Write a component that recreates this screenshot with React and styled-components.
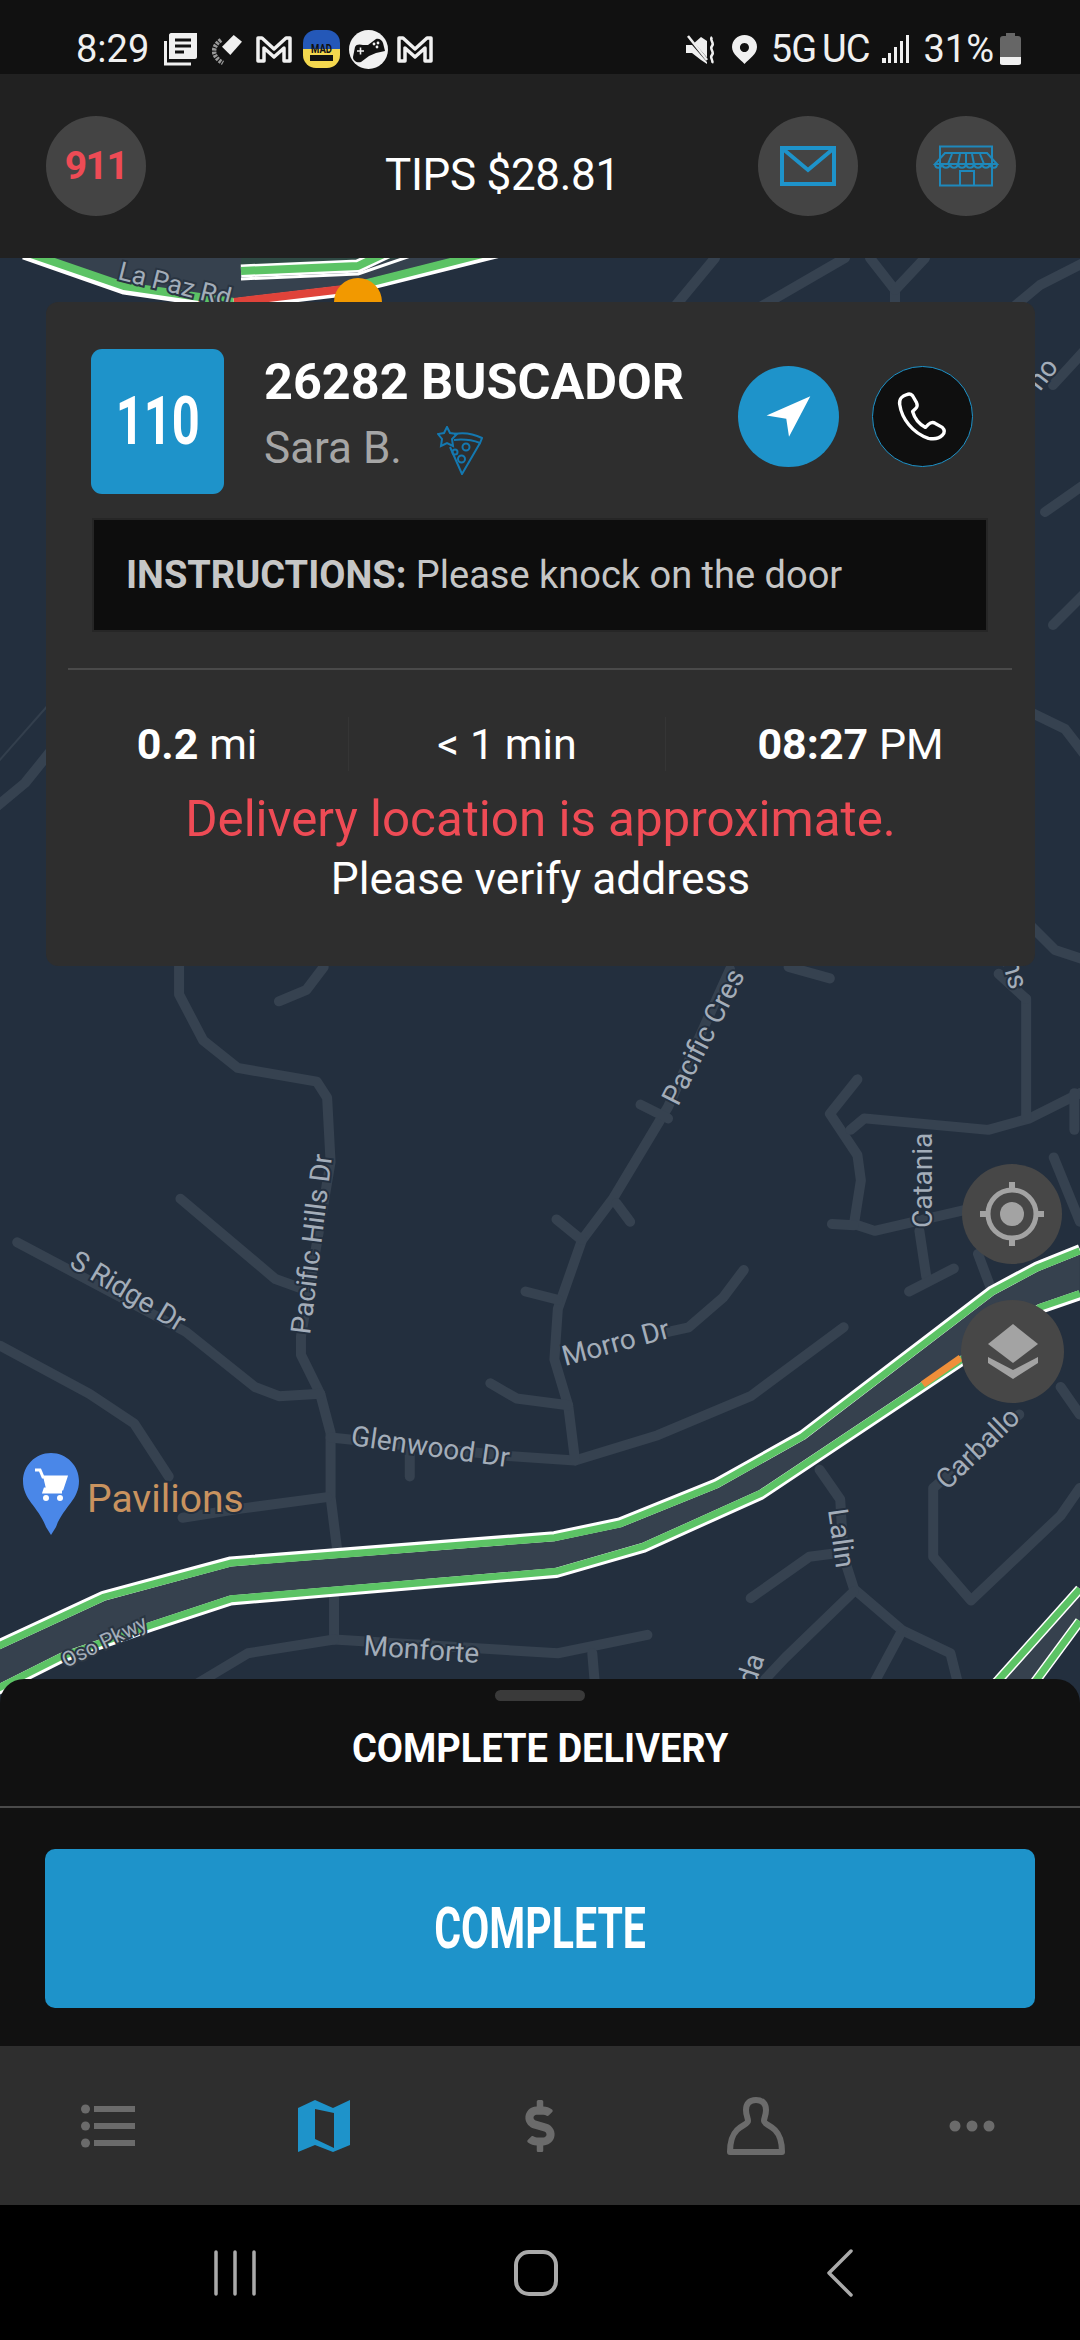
import styled, { createGlobalStyle } from "styled-components";
import { FaDollarSign } from "react-icons/fa";

const BLUE = "#1e93ca";
const RED = "#ee4b55";
const ROAD = "#364250";
const MUTED = "#6b6b6b";

const GlobalStyle = createGlobalStyle`
  html, body {
    margin: 0;
    padding: 0;
    background: #000;
  }
  * {
    box-sizing: border-box;
  }
`;

const Page = styled.div`
  width: 1080px;
  height: 2340px;
  overflow: hidden;
  display: flex;
  flex-direction: column;
  font-family: Roboto, "Liberation Sans", sans-serif;
  color: #fff;
`;

const StatusBar = styled.div`
  height: 74px;
  flex: none;
  background: #111;
  display: flex;
  align-items: flex-end;
  justify-content: space-between;
  padding: 0 59px 5px 76px;
`;

const StatusGroup = styled.div`
  display: flex;
  align-items: center;
  height: 40px;
`;

const StatusText = styled.span`
  font-size: ${(p) => p.$size || 38}px;
  line-height: 40px;
  color: #f0f0f0;
  margin-left: ${(p) => p.$ml || 0}px;
  letter-spacing: ${(p) => p.$ls || 0}px;
  white-space: nowrap;
`;

const StatusIcon = styled.svg`
  flex: none;
  margin-left: ${(p) => p.$ml || 0}px;
`;

const Header = styled.header`
  height: 184px;
  flex: none;
  background: #212121;
  display: flex;
  align-items: center;
  padding: 0 64px 0 46px;
`;

const RoundButton = styled.div`
  width: 100px;
  height: 100px;
  flex: none;
  border-radius: 50%;
  background: #444;
  display: flex;
  align-items: center;
  justify-content: center;
`;

const EmergencyText = styled.span`
  color: ${RED};
  font-size: 39px;
  font-weight: 700;
  letter-spacing: -1.5px;
`;

const Tips = styled.div`
  margin-left: 239px;
  padding-top: 18px;
  font-size: 44px;
  letter-spacing: -0.3px;
  white-space: nowrap;
`;

const HeaderActions = styled.div`
  margin-left: auto;
  display: flex;
  gap: 58px;
`;

const MapArea = styled.div`
  position: relative;
  height: 1445px;
  flex: none;
  background: #232f3e;
  padding-top: 44px;
`;

const MapDrawing = styled.svg`
  position: absolute;
  inset: 0;
`;

const MapLabel = styled.text`
  font-family: Roboto, sans-serif;
  font-size: ${(p) => p.$size || 28}px;
  fill: ${(p) => p.$color || "#a3adb9"};
  stroke: ${(p) => p.$halo || "#232f3e"};
  stroke-width: 4px;
  paint-order: stroke;
`;

const Card = styled.section`
  position: relative;
  width: 989px;
  height: 664px;
  margin-left: 46px;
  padding-top: 47px;
  background: #2e2e2e;
  border-radius: 12px;
`;

const TopRow = styled.div`
  display: flex;
  align-items: flex-start;
  margin: 0 62px 0 45px;
`;

const StopBadge = styled.div`
  width: 133px;
  height: 145px;
  flex: none;
  border-radius: 11px;
  background: ${BLUE};
  display: flex;
  align-items: center;
  justify-content: center;
  font-size: 66px;
  font-weight: 700;
`;

const StopNumber = styled.span`
  display: inline-block;
  transform: scaleX(0.74);
`;

const StopInfo = styled.div`
  margin-left: 40px;
`;

const Address = styled.h1`
  margin: 8px 0 0;
  font-size: 50.4px;
  line-height: 50px;
  font-weight: 700;
  white-space: nowrap;
`;

const CustomerRow = styled.div`
  display: flex;
  align-items: center;
  margin-top: 13px;
  height: 56px;
`;

const CustomerName = styled.span`
  font-size: 44px;
  color: #a6a6a6;
`;

const PizzaIcon = styled.svg`
  margin: 4px 0 0 35px;
  flex: none;
`;

const StopActions = styled.div`
  margin-left: auto;
  margin-top: 17px;
  display: flex;
  gap: 33px;
`;

const CircleAction = styled.div`
  width: 101px;
  height: 101px;
  border-radius: 50%;
  background: ${(p) => (p.$dark ? "#0f0f0f" : BLUE)};
  border: ${(p) => (p.$dark ? `1px solid ${BLUE}` : "none")};
  display: flex;
  align-items: center;
  justify-content: center;
`;

const InstructionBox = styled.div`
  margin: 24px 47px 0 46px;
  height: 114px;
  background: #0d0d0d;
  border: 2px solid #262626;
  display: flex;
  align-items: center;
  padding: 0 32px;
  font-size: 38px;
  color: #c6c6c6;
  white-space: pre;
`;

const InstructionLabel = styled.strong`
  font-weight: 700;
`;

const CardDivider = styled.div`
  height: 2px;
  margin: 36px 23px 0 22px;
  background: #4a4a4a;
`;

const StatsRow = styled.div`
  display: grid;
  grid-template-columns: 302px 317px 370px;
  margin-top: 47px;
  height: 54px;
`;

const Stat = styled.div`
  display: flex;
  align-items: center;
  justify-content: center;
  font-size: 43px;
  white-space: pre;
  border-left: ${(p) => (p.$first ? "none" : "1px solid #353535")};
`;

const StatValue = styled.strong`
  font-weight: 700;
`;

const Warning = styled.div`
  margin-top: 19px;
  text-align: center;
  font-size: 49.3px;
  line-height: 58px;
  color: ${RED};
`;

const WarningHint = styled.div`
  margin-top: 6px;
  text-align: center;
  font-size: 44.3px;
  line-height: 50px;
`;

const MapFab = styled.div`
  position: absolute;
  right: ${(p) => p.$right}px;
  top: ${(p) => p.$top}px;
  width: ${(p) => p.$size}px;
  height: ${(p) => p.$size}px;
  border-radius: 50%;
  background: #474747;
  display: flex;
  align-items: center;
  justify-content: center;
`;

const Sheet = styled.section`
  position: relative;
  flex: none;
  height: 367px;
  margin-top: -24px;
  background: #111;
  border-radius: 24px 24px 0 0;
  padding-top: 11px;
`;

const SheetHandle = styled.div`
  width: 90px;
  height: 11px;
  margin: 0 auto;
  border-radius: 6px;
  background: #3a3a3a;
`;

const SheetTitle = styled.div`
  height: 107px;
  padding-bottom: 10px;
  display: flex;
  align-items: center;
  justify-content: center;
  border-bottom: 2px solid #4a4a4a;
  font-size: 40px;
  font-weight: 700;
  white-space: nowrap;
`;

const SheetTitleText = styled.span`
  display: inline-block;
  transform: scaleX(0.95);
`;

const CompleteButton = styled.button`
  display: flex;
  align-items: center;
  justify-content: center;
  width: 990px;
  height: 159px;
  margin: 41px 0 0 45px;
  border: none;
  border-radius: 10px;
  background: ${BLUE};
  color: #fff;
  font-family: Roboto, sans-serif;
  font-size: 57px;
  font-weight: 700;
`;

const CompleteText = styled.span`
  display: inline-block;
  transform: scaleX(0.72);
`;

const TabBar = styled.nav`
  height: 159px;
  flex: none;
  background: #2e2e2e;
  display: grid;
  grid-template-columns: repeat(5, 216px);
  align-items: center;
  justify-items: center;
`;

const SystemBar = styled.div`
  flex: 1;
  background: #000;
  padding-left: 85px;
  display: grid;
  grid-template-columns: 300px 302px 306px;
  align-items: center;
  justify-items: center;
`;

function MapBackground() {
  const top = "M-30 1510 L150 1385 L335 1310 L805 1255 L900 1225 L1040 1140 L1165 1035 L1440 720 L1505 668 L1568 630";
  const bottom = "M-30 1610 L90 1520 L220 1452 L335 1395 L808 1335 L935 1280 L1105 1165 L1510 760 L1568 730";
  const ribbon = "M-30 1510 L150 1385 L335 1310 L805 1255 L900 1225 L1040 1140 L1165 1035 L1440 720 L1505 668 L1568 630 L1568 730 L1510 760 L1105 1165 L935 1280 L808 1335 L335 1395 L220 1452 L90 1520 L-30 1610 Z";
  const rampLeft = "M1568 1370 L1450 1568 L1430 1600";
  const rampRight = "M1568 1440 L1505 1568 L1490 1600";
  const streets = [
    "M260 0 L260 75 L295 175 L345 235 L460 265 L475 300 L480 440 L437 820 L437 860 L465 945 L480 1030 L480 1170 L490 1290",
    "M485 1390 L485 1480",
    "M405 90 L445 65 L470 15",
    "M262 520 L400 695 L437 715",
    "M25 615 L270 810 L370 930 L405 950 L465 945",
    "M0 840 L130 945 L195 1010 L245 1125",
    "M265 1215 L350 1195 L475 1170",
    "M480 1040 L735 1080 L835 1090 L955 1035 L1090 950 L1225 800",
    "M595 1060 L595 1125",
    "M1060 20 L970 320 L890 520 L845 610 L810 760 L805 870 L825 970 L835 1090",
    "M930 315 L970 345",
    "M808 565 L845 610",
    "M895 530 L915 570",
    "M763 722 L810 740",
    "M712 922 L750 955 L825 970",
    "M970 810 L1000 800 L1050 735 L1080 675",
    "M1245 260 L1205 335 L1245 425 L1250 480 L1240 575 L1270 590 L1400 545",
    "M1208 575 L1240 578",
    "M1235 370 L1255 345 L1435 370 L1495 345 L1568 290",
    "M1490 85 L1490 345",
    "M1560 290 L1560 370",
    "M1335 590 L1345 690",
    "M1385 672 L1320 722",
    "M1420 640 L1440 720",
    "M1530 430 L1568 570",
    "M1480 990 L1355 1150 L1355 1300 L1410 1395 L1540 1210 L1568 1150",
    "M1540 930 L1568 990",
    "M1190 1110 L1220 1175 L1225 1300 L1240 1370 L1310 1460 L1380 1510 L1395 1600",
    "M1090 1390 L1175 1300 L1225 1290",
    "M1240 1375 L1140 1520 L1090 1600",
    "M1310 1460 L1260 1600",
    "M485 1480 L810 1510 L940 1470",
    "M485 1480 L360 1510 L260 1600",
    "M860 1510 L865 1600",
    "M1145 15 L1205 40",
    "M1450 30 L1490 85",
  ];
  const upperStreets = [
    "M715 258 L672 310",
    "M845 258 L755 310",
    "M870 258 L895 290 L895 310",
    "M925 258 L895 290",
    "M1085 262 L1040 285 L1010 310",
    "M1085 350 L1053 385",
    "M1085 484 L1045 512",
    "M1085 593 L1053 625",
    "M1030 712 L1065 729 L1085 755",
    "M1030 925 L1055 950 L1085 960",
    "M-5 808 L25 783 L50 752",
  ];

  return (
    <MapDrawing width="1080" height="1445" viewBox="0 258 1080 1445">
      <g fill="none" stroke={ROAD} strokeWidth="10" strokeLinecap="round" strokeLinejoin="round">
        {upperStreets.map((d) => (
          <path key={d} d={d} />
        ))}
      </g>
      <path d="M-2 762 L50 703" stroke="#333f4d" strokeWidth="2" fill="none" />

      {/* La Paz Rd, above the card */}
      <path d="M24 258 L124 285 L234 303 L344 290 L492 258 Z" fill="#36414e" />
      <path d="M241 258 H400 L358 266 L241 272 Z" fill="#2f4a45" />
      <g fill="none" strokeLinejoin="round">
        <path d="M24 254 L124 289 L234 305" stroke="#fff" strokeWidth="11" />
        <path d="M28 253 L124 286 L234 302" stroke="#5cc365" strokeWidth="8" />
        <path d="M241 271 L358 266 L392 250" stroke="#fff" strokeWidth="13" />
        <path d="M241 271 L358 266 L392 250" stroke="#5cc365" strokeWidth="8" />
        <path d="M241 279 L358 274 L428 250" stroke="#fff" strokeWidth="3" />
        <path d="M234 304 L344 291 L500 252" stroke="#fff" strokeWidth="11" />
        <path d="M234 302 L344 289" stroke="#e0433a" strokeWidth="8" />
        <path d="M344 289 L498 250" stroke="#5cc365" strokeWidth="8" />
      </g>
      <circle cx="358" cy="302" r="24" fill="#f29900" />
      <MapLabel x="117" y="279" transform="rotate(14 117 279)" $size="26" $halo="#2a3542">
        La Paz Rd
      </MapLabel>

      {/* the rest is traced at the scale of the lower map */}
      <g transform="translate(0 960) scale(0.6887 0.4591)">
        <g fill="none" stroke={ROAD} strokeWidth="10" strokeLinecap="round" strokeLinejoin="round">
          {streets.map((d) => (
            <path key={d} d={d} vectorEffect="non-scaling-stroke" />
          ))}
        </g>
        <path d={ribbon} fill="#36414e" />
        <path d="M1568 1370 L1430 1600 L1490 1600 L1568 1440 Z" fill="#36414e" />
        <g fill="none" strokeLinejoin="round">
          <path d={top} stroke="#fff" strokeWidth="10" vectorEffect="non-scaling-stroke" />
          <path d={top} transform="translate(0 3.5)" stroke="#5cc365" strokeWidth="7" vectorEffect="non-scaling-stroke" />
          <path d={bottom} stroke="#fff" strokeWidth="10" vectorEffect="non-scaling-stroke" />
          <path d={bottom} transform="translate(0 -3.5)" stroke="#5cc365" strokeWidth="7" vectorEffect="non-scaling-stroke" />
          <path d="M1340 928 L1395 870" transform="translate(0 -3.5)" stroke="#ef8f3a" strokeWidth="7" vectorEffect="non-scaling-stroke" />
          <path d={rampLeft} stroke="#fff" strokeWidth="10" vectorEffect="non-scaling-stroke" />
          <path d={rampLeft} stroke="#5cc365" strokeWidth="7" vectorEffect="non-scaling-stroke" />
          <path d={rampRight} stroke="#fff" strokeWidth="10" vectorEffect="non-scaling-stroke" />
          <path d={rampRight} stroke="#5cc365" strokeWidth="7" vectorEffect="non-scaling-stroke" />
        </g>
      </g>

      <MapLabel x="678" y="1107" transform="rotate(-63 678 1107)">Pacific Cres</MapLabel>
      <MapLabel x="310" y="1335" transform="rotate(-83 310 1335)">Pacific Hills Dr</MapLabel>
      <MapLabel x="68" y="1266" transform="rotate(31 68 1266)">S Ridge Dr</MapLabel>
      <MapLabel x="565" y="1366" transform="rotate(-15 565 1366)">Morro Dr</MapLabel>
      <MapLabel x="350" y="1445" transform="rotate(8 350 1445)">Glenwood Dr</MapLabel>
      <MapLabel x="932" y="1228" transform="rotate(-90 932 1228)">Catania</MapLabel>
      <MapLabel x="947" y="1491" transform="rotate(-44 947 1491)">Carballo</MapLabel>
      <MapLabel x="828" y="1510" transform="rotate(82 828 1510)">Lalin</MapLabel>
      <MapLabel x="363" y="1655" transform="rotate(4 363 1655)">Monforte</MapLabel>
      <MapLabel x="66" y="1668" transform="rotate(-26 66 1668)" $size="21" $halo="#2a3542">Oso Pkwy</MapLabel>
      <MapLabel x="755" y="1687" transform="rotate(-72 755 1687)">da</MapLabel>
      <MapLabel x="1002" y="962" transform="rotate(74 1002 962)">ns</MapLabel>
      <MapLabel x="1040" y="392" transform="rotate(-52 1040 392)">no</MapLabel>

      <path
        d="M51 1453 C35 1453 23 1466 23 1481 C23 1500 38 1506 46 1527 L51 1535 L56 1527 C64 1506 79 1500 79 1481 C79 1466 67 1453 51 1453 Z"
        fill="#4a87e8"
      />
      <path d="M35 1470 H40 L43 1477 H66 L62 1489 H45 L44 1492 H62" fill="none" stroke="#fff" strokeWidth="3" />
      <path d="M43 1476 H66 L62 1489 H46 Z" fill="#fff" />
      <circle cx="46" cy="1498" r="3" fill="#fff" />
      <circle cx="60" cy="1498" r="3" fill="#fff" />
      <MapLabel x="87" y="1512" $size="39" $color="#c9935f" $halo="#232f3e">Pavilions</MapLabel>
    </MapDrawing>
  );
}

function MailGlyph() {
  return (
    <svg width="56" height="40" viewBox="0 0 56 40" fill="none" stroke={BLUE} strokeWidth="4">
      <rect x="2" y="2" width="52" height="36" />
      <path d="M3 3 L28 24 L53 3" />
    </svg>
  );
}

function StoreGlyph() {
  return (
    <svg width="66" height="42" viewBox="0 0 66 42" fill="none" stroke="#1e88bb" strokeWidth="2">
      <path d="M7 1.5 H59 V40.5 H7 Z" />
      <path d="M12 8 H54 L64 19 H2 Z" />
      <path d="M2 19 C2 24 8 24 9 19 C10 24 16 24 17 19 C18 24 24 24 25 19 C26 24 32 24 33 19 C34 24 40 24 41 19 C42 24 48 24 49 19 C50 24 56 24 57 19 C58 24 64 24 64 19" />
      <path d="M19 9 L15 19 M27 9 L25 19 M33 9 V19 M39 9 L41 19 M47 9 L51 19" />
      <path d="M27 40 V26 H41 V40" />
    </svg>
  );
}

function BookGlyph() {
  return (
    <StatusIcon $ml={15} width="33" height="33" viewBox="0 0 33 33">
      <path d="M5 2 C5 1 6 0 7 0 H33 V24 C33 25 32 26 31 26 H5 Z" fill="#f0f0f0" />
      <path d="M11 7 H27 M11 13 H27 M11 19 H20" stroke="#111" strokeWidth="3" />
      <path d="M1.5 8 V31 H27" fill="none" stroke="#f0f0f0" strokeWidth="3" />
    </StatusIcon>
  );
}

function MailMark({ ml }) {
  return (
    <StatusIcon $ml={ml} width="36" height="28" viewBox="0 0 36 28" fill="none" stroke="#f0f0f0" strokeWidth="3.5" strokeLinejoin="round">
      <path d="M2 26 V3 H6 L18 14 L30 3 H34 V26 H28 V13 L18 22 L8 13 V26 Z" />
    </StatusIcon>
  );
}

function NotificationIcons() {
  return (
    <StatusGroup>
      <StatusText>8:29</StatusText>
      <BookGlyph />
      <StatusIcon $ml={15} width="32" height="32" viewBox="0 0 32 32">
        <path d="M10 13.7 L21.7 2 L30 8.7 L18.3 22 Z" fill="#f0f0f0" />
        <path d="M9 7 C-1 14 0 24 11 30" fill="none" stroke="#999" strokeWidth="4.5" strokeDasharray="2.5 1" />
      </StatusIcon>
      <MailMark ml={12} />
      <StatusIcon $ml={11} width="37" height="38" viewBox="0 0 37 38">
        <defs>
          <clipPath id="madClip">
            <rect width="37" height="38" rx="13" />
          </clipPath>
        </defs>
        <g clipPath="url(#madClip)">
          <rect width="37" height="19" fill="#2458b8" />
          <rect y="19" width="37" height="19" fill="#f4d84e" />
          <text x="18.5" y="23" textAnchor="middle" fontFamily="Roboto, sans-serif" fontSize="13" fontWeight="700" fill="#111" textLength="21" lengthAdjust="spacingAndGlyphs">MAD</text>
          <rect x="7" y="25" width="23" height="6" fill="#111" />
        </g>
      </StatusIcon>
      <StatusIcon $ml={9} width="39" height="39" viewBox="0 0 39 39">
        <circle cx="19.5" cy="19.5" r="19.5" fill="#f0f0f0" />
        <path d="M4 27 L6 17 C7 14 11 14 14 15 H19 L27 9 C30 8 33 10 34 13 L36 21 L27 23 L20 26 L12 32 C8 33 4 31 4 27 Z" fill="#111" />
        <path d="M8 21 h7 M11.5 17.5 v7" stroke="#f0f0f0" strokeWidth="1.6" />
        <circle cx="25" cy="14" r="1.4" fill="#f0f0f0" />
        <circle cx="28" cy="17" r="1.4" fill="#f0f0f0" />
        <circle cx="29" cy="13" r="1.4" fill="#f0f0f0" />
      </StatusIcon>
      <MailMark ml={9} />
    </StatusGroup>
  );
}

function SystemIcons() {
  return (
    <StatusGroup>
      <StatusIcon width="30" height="29" viewBox="0 0 30 29">
        <path d="M0 10 H6 L15 2 L21 6 V29 L15 25 L6 18 H0 Z" fill="#f0f0f0" />
        <path d="M2 3 L22 26" stroke="#111" strokeWidth="3" />
        <path d="M2 1 L21 25" stroke="#f0f0f0" strokeWidth="2.5" />
        <path d="M26 2 C23 5 29 8 26 11 C23 14 29 17 26 20 C23 23 28 25 26 28" fill="none" stroke="#f0f0f0" strokeWidth="2.5" />
      </StatusIcon>
      <StatusIcon $ml={16} width="25" height="29" viewBox="0 0 25 29">
        <path fillRule="evenodd" d="M12.5 0 C5.5 0 0 5 0 12 C0 19 8 24 12.5 29 C17 24 25 19 25 12 C25 5 19.5 0 12.5 0 Z M12.5 8 A4.5 4.5 0 1 1 12.4 8 Z" fill="#f0f0f0" />
      </StatusIcon>
      <StatusText $ml={14} $ls={-1}>5G</StatusText>
      <StatusText $ml={6} $ls={-1}>UC</StatusText>
      <StatusIcon $ml={13} width="28" height="28" viewBox="0 0 28 28" fill="#f0f0f0">
        <rect x="0" y="23" width="4" height="5" />
        <rect x="6" y="18" width="3" height="10" />
        <rect x="12" y="12" width="3" height="16" />
        <rect x="18" y="6" width="3" height="22" />
        <rect x="24" y="0" width="3" height="28" />
      </StatusIcon>
      <StatusText $ml={13}>31%</StatusText>
      <StatusIcon $ml={6} width="21" height="32" viewBox="0 0 21 32">
        <path d="M6 0 H15 V3 H18 C20 3 21 4 21 6 V30 C21 31 20 32 18 32 H3 C1 32 0 31 0 30 V6 C0 4 1 3 3 3 H6 Z" fill="#666" />
        <path d="M0 24 H21 V30 C21 31 20 32 18 32 H3 C1 32 0 31 0 30 Z" fill="#f0f0f0" />
      </StatusIcon>
    </StatusGroup>
  );
}

export default function App() {
  return (
    <>
      <GlobalStyle />
      <Page>
        <StatusBar>
          <NotificationIcons />
          <SystemIcons />
        </StatusBar>

        <Header>
          <RoundButton>
            <EmergencyText>911</EmergencyText>
          </RoundButton>
          <Tips>TIPS $28.81</Tips>
          <HeaderActions>
            <RoundButton>
              <MailGlyph />
            </RoundButton>
            <RoundButton>
              <StoreGlyph />
            </RoundButton>
          </HeaderActions>
        </Header>

        <MapArea>
          <MapBackground />
          <Card>
            <TopRow>
              <StopBadge>
                <StopNumber>110</StopNumber>
              </StopBadge>
              <StopInfo>
                <Address>26282 BUSCADOR</Address>
                <CustomerRow>
                  <CustomerName>Sara B.</CustomerName>
                  <PizzaIcon width="46" height="49" viewBox="0 0 46 49" fill="none" stroke="#1478b0" strokeWidth="2">
                    <path d="M10 1 L13 7 L20 8 L15 13 L16 20 L10 17 L4 20 L5 13 L1 8 L7 7 Z" />
                    <path d="M17 8 C27 6 37 8 45 12 L43 17 C35 14 26 13 17 14" />
                    <path d="M43 17 L25 48 L13 21" />
                    <circle cx="29" cy="21" r="3.5" />
                    <circle cx="24.5" cy="33" r="3.5" />
                    <circle cx="18" cy="26" r="2.5" />
                  </PizzaIcon>
                </CustomerRow>
              </StopInfo>
              <StopActions>
                <CircleAction>
                  <svg width="101" height="101" viewBox="0 0 100 100">
                    <path d="M71.6 30 L28.3 49 L47.8 52.3 L50.5 70 Z" fill="#fff" />
                  </svg>
                </CircleAction>
                <CircleAction $dark>
                  <svg width="99" height="99" viewBox="0 0 100 100" fill="none" stroke="#fff" strokeWidth="3.4" strokeLinejoin="round">
                    <path d="M34 28 C30 29 26 32 27 38 C29 52 40 67 56 72 C61 73 66 73 70 69 C73 66 72 63 70 61 L63 57 C60 55 58 56 56 58 L53 61 C47 58 42 52 40 45 L43 42 C45 40 45 38 44 36 L40 29 C38 27 36 27 34 28 Z" />
                  </svg>
                </CircleAction>
              </StopActions>
            </TopRow>

            <InstructionBox>
              <InstructionLabel>INSTRUCTIONS:</InstructionLabel> Please knock on the door
            </InstructionBox>

            <CardDivider />

            <StatsRow>
              <Stat $first>
                <StatValue>0.2</StatValue> mi
              </Stat>
              <Stat>{"< 1 min"}</Stat>
              <Stat>
                <StatValue>08:27</StatValue> PM
              </Stat>
            </StatsRow>

            <Warning>Delivery location is approximate.</Warning>
            <WarningHint>Please verify address</WarningHint>
          </Card>

          <MapFab $right={18} $top={906} $size={100}>
            <svg width="66" height="66" viewBox="0 0 66 66" fill="none" stroke="#a3a3a3" strokeWidth="5">
              <circle cx="33" cy="33" r="24" />
              <circle cx="33" cy="33" r="12" fill="#a3a3a3" stroke="none" />
              <path d="M33 1 V9 M33 57 V65 M1 33 H9 M57 33 H65" strokeWidth="6" />
            </svg>
          </MapFab>
          <MapFab $right={16} $top={1042} $size={103}>
            <svg width="52" height="56" viewBox="0 0 52 56" fill="#a3a3a3">
              <path d="M26 0 L51 20 L26 39 L1 20 Z" />
              <path d="M1 33 L26 46 L51 33 V39 L26 55 L1 39 Z" />
            </svg>
          </MapFab>
        </MapArea>

        <Sheet>
          <SheetHandle />
          <SheetTitle>
            <SheetTitleText>COMPLETE DELIVERY</SheetTitleText>
          </SheetTitle>
          <CompleteButton>
            <CompleteText>COMPLETE</CompleteText>
          </CompleteButton>
        </Sheet>

        <TabBar>
          <svg width="54" height="44" viewBox="0 0 54 44" fill={MUTED}>
            <circle cx="4.5" cy="5" r="4.5" />
            <circle cx="4.5" cy="22" r="4.5" />
            <circle cx="4.5" cy="39" r="4.5" />
            <rect x="13" y="2" width="41" height="6" />
            <rect x="13" y="19" width="41" height="6" />
            <rect x="13" y="36" width="41" height="6" />
          </svg>
          <svg width="52" height="52" viewBox="0 0 52 52" fill={BLUE}>
            <path
              fillRule="evenodd"
              d="M0 8 L17 0 L35 8 L52 0 V45 L35 52 L17 45 L0 52 Z M17 9 V39 L36 48 V13 Z"
            />
          </svg>
          <FaDollarSign size={52} color={MUTED} />
          <svg width="58" height="58" viewBox="0 0 58 58" fill="none" stroke={MUTED} strokeWidth="6" strokeLinejoin="round">
            <path d="M29 3 C22 3 19 7 19 13 C19 18 21 21 21 24 C21 27 15 28 10 33 C5 38 3 46 3 55 H55 C55 46 53 38 48 33 C43 28 37 27 37 24 C37 21 39 18 39 13 C39 7 36 3 29 3 Z" />
          </svg>
          <svg width="46" height="12" viewBox="0 0 46 12" fill={MUTED}>
            <circle cx="6" cy="6" r="5.5" />
            <circle cx="23" cy="6" r="5.5" />
            <circle cx="40" cy="6" r="5.5" />
          </svg>
        </TabBar>

        <SystemBar>
          <svg width="42" height="46" viewBox="0 0 42 46" stroke="#aaa" strokeWidth="3.5" strokeLinecap="round">
            <path d="M2 2 V44 M21 2 V44 M40 2 V44" />
          </svg>
          <svg width="44" height="46" viewBox="0 0 44 46" fill="none" stroke="#aaa" strokeWidth="4">
            <rect x="2" y="2" width="40" height="42" rx="13" />
          </svg>
          <svg width="28" height="48" viewBox="0 0 28 48" fill="none" stroke="#aaa" strokeWidth="3.5" strokeLinecap="round" strokeLinejoin="round">
            <path d="M25 2 L3 24 L25 46" />
          </svg>
        </SystemBar>
      </Page>
    </>
  );
}
